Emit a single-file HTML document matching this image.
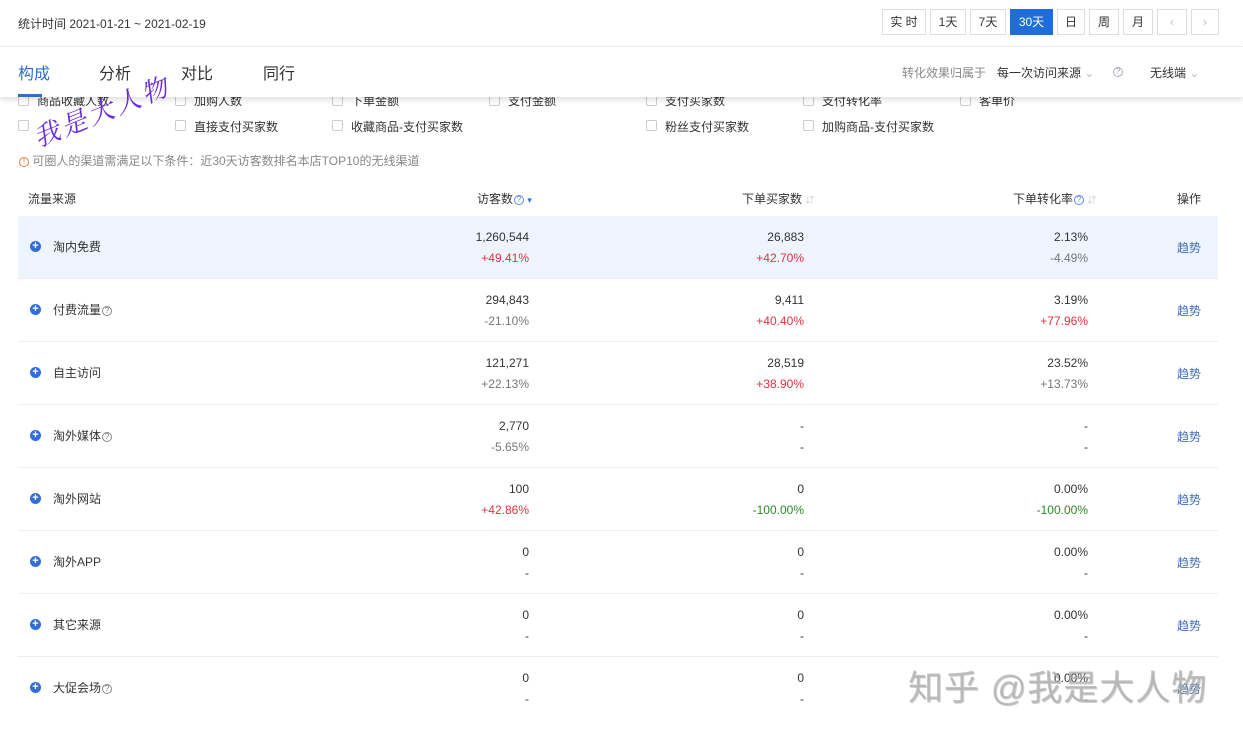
<!DOCTYPE html>
<html><head><meta charset="utf-8"><style>
*{margin:0;padding:0;box-sizing:border-box}
body{width:1243px;height:732px;overflow:hidden;background:#fff;font-family:"Liberation Sans","Noto Sans CJK SC",sans-serif;font-size:12px;color:#333;position:relative}
.a{position:absolute;white-space:nowrap}
.btn{position:absolute;top:9px;height:26px;border:1px solid #ddd;line-height:24px;text-align:center;font-size:12px;color:#333;background:#fff}
.hdr{position:absolute;left:0;top:47px;width:1243px;height:50px;background:#fff;box-shadow:0 3px 5px rgba(0,0,0,.12);z-index:5}
.cb{position:absolute;width:11px;height:11px;border:1px solid #ccc;border-radius:2px}
.cl{position:absolute;color:#333;font-size:12px;white-space:nowrap}
.row{position:absolute;left:18px;width:1200px;height:63px;border-bottom:1px solid #eee}
.row .ic{position:absolute;left:12px;top:25px;width:11px;height:11px;border-radius:50%;background:#2f6fd8;color:#fff;font-size:11px;line-height:11px;text-align:center;font-weight:bold}
.row .nm{position:absolute;left:35px;top:22px;font-size:12px}
.v{position:absolute;text-align:right;width:150px;font-size:12px;line-height:21px;top:11px}
.red{color:#e0333d}.grn{color:#2a8a2a}.gry{color:#777}
.tr{position:absolute;left:1159px;top:23px;color:#3f6fb5;font-size:12px}
.q{display:inline-block;width:10px;height:10px;border:1px solid #888;border-radius:50%;font-size:8px;line-height:8px;text-align:center;color:#777;vertical-align:1px;margin-left:1px}
.qb{border-color:#5b8de0;color:#5b8de0}
</style></head><body>
<div class="a" style="left:18px;top:15px;font-size:12px">统计时间 2021-01-21 ~ 2021-02-19</div>
<div class="btn" style="left:882px;width:44px">实 时</div>
<div class="btn" style="left:930px;width:36px">1天</div>
<div class="btn" style="left:970px;width:36px">7天</div>
<div class="btn" style="left:1010px;width:43px;background:#1e6ed8;border-color:#1e6ed8;color:#fff">30天</div>
<div class="btn" style="left:1057px;width:28px">日</div>
<div class="btn" style="left:1089px;width:30px">周</div>
<div class="btn" style="left:1123px;width:30px">月</div>
<div class="btn" style="left:1157px;width:30px;color:#bbb">&#8249;</div>
<div class="btn" style="left:1191px;width:28px;color:#bbb">&#8250;</div>
<div class="a" style="left:0;top:46px;width:1243px;height:1px;background:#eee"></div>
<div class="hdr">
<div class="a" style="left:18px;top:13px;font-size:16px;color:#2f6fc8">构成</div>
<div class="a" style="left:18px;top:47px;width:24px;height:3px;background:#2f6fc8"></div>
<div class="a" style="left:99px;top:13px;font-size:16px">分析</div>
<div class="a" style="left:181px;top:13px;font-size:16px">对比</div>
<div class="a" style="left:263px;top:13px;font-size:16px">同行</div>
<div class="a" style="left:902px;top:17px;color:#888">转化效果归属于</div>
<div class="a" style="left:997px;top:17px">每一次访问来源 <span style="color:#bbb">&#8964;</span></div>
<div class="a" style="left:1112px;top:17px"><span class="q" style="border-color:#aab;color:#aab">?</span></div>
<div class="a" style="left:1150px;top:17px">无线端 <span style="color:#bbb">&#8964;</span></div>
</div>
<div class="cb" style="left:18px;top:95px"></div><div class="cl" style="left:37px;top:92px">商品收藏人数</div>
<div class="cb" style="left:175px;top:95px"></div><div class="cl" style="left:194px;top:92px">加购人数</div>
<div class="cb" style="left:332px;top:95px"></div><div class="cl" style="left:351px;top:92px">下单金额</div>
<div class="cb" style="left:489px;top:95px"></div><div class="cl" style="left:508px;top:92px">支付金额</div>
<div class="cb" style="left:646px;top:95px"></div><div class="cl" style="left:665px;top:92px">支付买家数</div>
<div class="cb" style="left:803px;top:95px"></div><div class="cl" style="left:822px;top:92px">支付转化率</div>
<div class="cb" style="left:960px;top:95px"></div><div class="cl" style="left:979px;top:92px">客单价</div>
<div class="cb" style="left:18px;top:120px"></div>
<div class="cb" style="left:175px;top:120px"></div><div class="cl" style="left:194px;top:118px">直接支付买家数</div>
<div class="cb" style="left:332px;top:120px"></div><div class="cl" style="left:351px;top:118px">收藏商品-支付买家数</div>
<div class="cb" style="left:646px;top:120px"></div><div class="cl" style="left:665px;top:118px">粉丝支付买家数</div>
<div class="cb" style="left:803px;top:120px"></div><div class="cl" style="left:822px;top:118px">加购商品-支付买家数</div>
<div class="a" style="left:40px;top:122px;font-size:26px;line-height:30px;letter-spacing:3px;color:#6a2be0;font-style:italic;transform:rotate(-22deg);transform-origin:left bottom;z-index:6;font-family:'Noto Serif CJK SC',serif">我是大人物</div>
<div class="a" style="left:18px;top:152px;color:#888"><span class="q" style="border-color:#e08040;color:#e08040">!</span> 可圈人的渠道需满足以下条件：近30天访客数排名本店TOP10的无线渠道</div>
<div class="a" style="left:28px;top:190px">流量来源</div>
<div class="a" style="left:477px;top:190px">访客数<span class="q qb">?</span> <span style="color:#2f6fd8;font-size:9px">&#9662;</span></div>
<div class="a" style="left:742px;top:190px">下单买家数 <span style="color:#ccc;font-size:9px">&#8693;</span></div>
<div class="a" style="left:1013px;top:190px">下单转化率<span class="q qb">?</span> <span style="color:#ccc;font-size:9px">&#8693;</span></div>
<div class="a" style="left:1177px;top:190px">操作</div>

<div class="row" style="top:216px;background:#edf4fd"><div class="ic">+</div><div class="nm">淘内免费</div>
<div class="v" style="left:361px">1,260,544<br><span class="red">+49.41%</span></div>
<div class="v" style="left:636px">26,883<br><span class="red">+42.70%</span></div>
<div class="v" style="left:920px">2.13%<br><span class="gry">-4.49%</span></div><div class="tr">趋势</div></div>
<div class="row" style="top:279px"><div class="ic">+</div><div class="nm">付费流量<span class="q">?</span></div>
<div class="v" style="left:361px">294,843<br><span class="gry">-21.10%</span></div>
<div class="v" style="left:636px">9,411<br><span class="red">+40.40%</span></div>
<div class="v" style="left:920px">3.19%<br><span class="red">+77.96%</span></div><div class="tr">趋势</div></div>
<div class="row" style="top:342px"><div class="ic">+</div><div class="nm">自主访问</div>
<div class="v" style="left:361px">121,271<br><span class="gry">+22.13%</span></div>
<div class="v" style="left:636px">28,519<br><span class="red">+38.90%</span></div>
<div class="v" style="left:920px">23.52%<br><span class="gry">+13.73%</span></div><div class="tr">趋势</div></div>
<div class="row" style="top:405px"><div class="ic">+</div><div class="nm">淘外媒体<span class="q">?</span></div>
<div class="v" style="left:361px">2,770<br><span class="gry">-5.65%</span></div>
<div class="v" style="left:636px">-<br>-</div>
<div class="v" style="left:920px">-<br>-</div><div class="tr">趋势</div></div>
<div class="row" style="top:468px"><div class="ic">+</div><div class="nm">淘外网站</div>
<div class="v" style="left:361px">100<br><span class="red">+42.86%</span></div>
<div class="v" style="left:636px">0<br><span class="grn">-100.00%</span></div>
<div class="v" style="left:920px">0.00%<br><span class="grn">-100.00%</span></div><div class="tr">趋势</div></div>
<div class="row" style="top:531px"><div class="ic">+</div><div class="nm">淘外APP</div>
<div class="v" style="left:361px">0<br>-</div>
<div class="v" style="left:636px">0<br>-</div>
<div class="v" style="left:920px">0.00%<br>-</div><div class="tr">趋势</div></div>
<div class="row" style="top:594px"><div class="ic">+</div><div class="nm">其它来源</div>
<div class="v" style="left:361px">0<br>-</div>
<div class="v" style="left:636px">0<br>-</div>
<div class="v" style="left:920px">0.00%<br>-</div><div class="tr">趋势</div></div>
<div class="row" style="top:657px;border-bottom:none"><div class="ic">+</div><div class="nm">大促会场<span class="q">?</span></div>
<div class="v" style="left:361px">0<br>-</div>
<div class="v" style="left:636px">0<br>-</div>
<div class="v" style="left:920px">0.00%<br>-</div><div class="tr">趋势</div></div>
<div class="a" style="left:908px;top:660px;font-size:35px;letter-spacing:1px;color:rgba(175,175,175,.75);z-index:7;text-shadow:1px 1px 0 rgba(120,120,120,.35)">知乎 @我是大人物</div>
</body></html>
